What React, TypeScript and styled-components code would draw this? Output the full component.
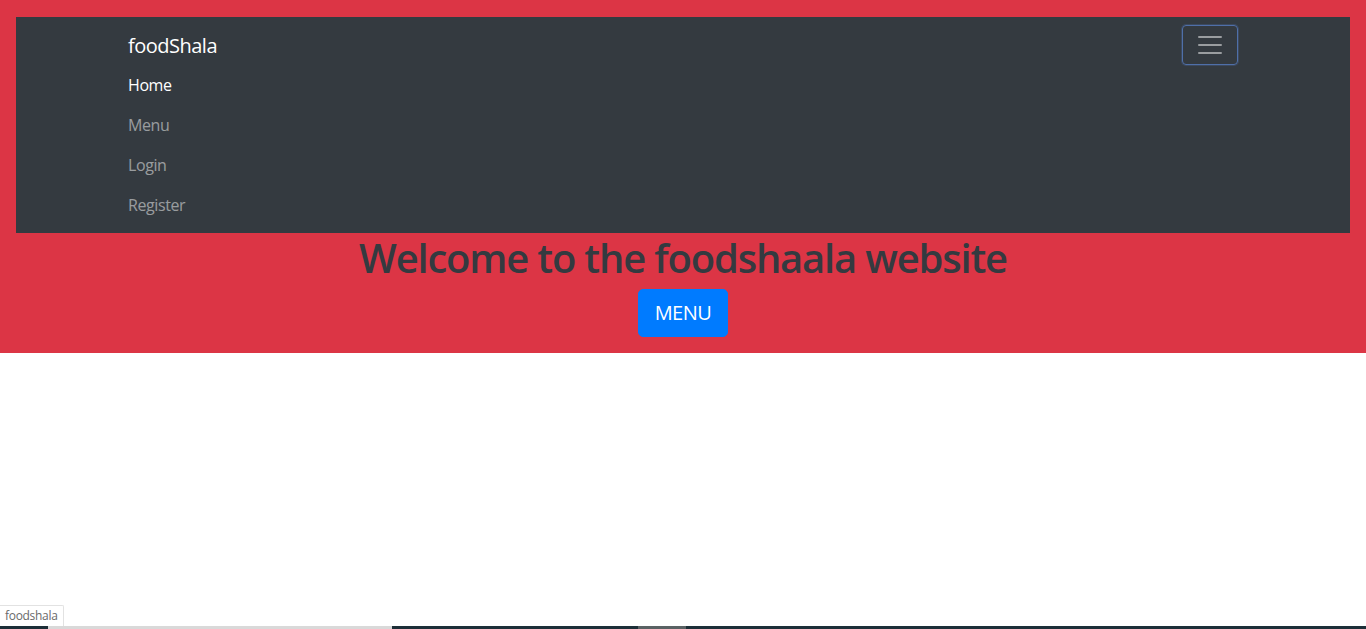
import React from "react";
import styled, { createGlobalStyle } from "styled-components";

const Global = createGlobalStyle`
  html, body { margin: 0; padding: 0; background: #fff; }
  body {
    font-family: "Open Sans", "Noto Sans", "Liberation Sans", sans-serif;
    font-size: 16px;
    line-height: 1.5;
    color: #212529;
  }
  * { box-sizing: border-box; }
`;

const Hero = styled.section`
  background: #dc3545;
  padding: 17px 16px 16px;
  display: flex;
  flex-direction: column;
  align-items: center;
`;

const Navbar = styled.nav`
  align-self: stretch;
  background: #343a40;
  padding: 8px 16px;
`;

const Container = styled.div`
  max-width: 1140px;
  margin: 0 auto;
  padding: 0 15px;
  display: flex;
  flex-wrap: wrap;
  align-items: center;
  justify-content: space-between;
`;

const Brand = styled.a`
  color: #fff;
  font-size: 20px;
  line-height: 30px;
  padding: 6px 0 4px;
  letter-spacing: -0.5px;
  text-decoration: none;
`;

const Toggler = styled.button`
  width: 56px;
  height: 40px;
  padding: 4px 12px;
  background: transparent;
  border: 1px solid #4f6fa8;
  border-radius: 4px;
  box-shadow: 0 0 0 1px rgba(80, 110, 170, 0.3);
  display: flex;
  align-items: center;
  justify-content: center;
`;

const NavList = styled.ul`
  flex-basis: 100%;
  list-style: none;
  margin: 0;
  padding: 0;
  display: flex;
  flex-direction: column;
`;

const NavLink = styled.a<{ $active?: boolean }>`
  display: block;
  padding: 8px 0;
  line-height: 24px;
  font-size: 16px;
  letter-spacing: -0.4px;
  text-decoration: none;
  color: ${(p) => (p.$active ? "#fff" : "rgba(255,255,255,0.5)")};
`;

const Title = styled.h1`
  margin: 1px 0 7px;
  font-size: 40px;
  line-height: 48px;
  font-weight: 600;
  color: #343a40;
  letter-spacing: -1.2px;
`;

const MenuButton = styled.button`
  font-family: inherit;
  font-size: 20px;
  line-height: 30px;
  padding: 8px 16px;
  border: 1px solid #007bff;
  border-radius: 5px;
  background: #007bff;
  color: #fff;
  letter-spacing: -0.5px;
`;

const StatusTip = styled.div`
  position: fixed;
  left: 0;
  bottom: 3px;
  height: 21px;
  padding: 0 5px;
  background: #fff;
  border: 1px solid #e2e2e2;
  border-left: none;
  border-bottom: none;
  border-top-right-radius: 2px;
  font-size: 12px;
  line-height: 20px;
  color: #6a6a6a;
  letter-spacing: -0.3px;
`;

const Taskbar = styled.div`
  position: fixed;
  left: 0;
  right: 0;
  bottom: 0;
  height: 3px;
  display: flex;
  background: #1d2f38;
`;

const TaskSeg = styled.div<{ $w: number; $c: string }>`
  width: ${(p) => p.$w}px;
  background: ${(p) => p.$c};
`;

const ToggleIcon = () => (
  <svg width="30" height="30" viewBox="0 0 30 30">
    <path
      d="M4 7h22M4 15h22M4 23h22"
      stroke="rgba(255,255,255,0.5)"
      strokeWidth="2"
      strokeLinecap="round"
    />
  </svg>
);

export default function App() {
  return (
    <>
      <Global />
      <Hero>
        <Navbar>
          <Container>
            <Brand href="#">foodShala</Brand>
            <Toggler aria-label="Toggle navigation">
              <ToggleIcon />
            </Toggler>
            <NavList>
              <li><NavLink href="#" $active>Home</NavLink></li>
              <li><NavLink href="#">Menu</NavLink></li>
              <li><NavLink href="#">Login</NavLink></li>
              <li><NavLink href="#">Register</NavLink></li>
            </NavList>
          </Container>
        </Navbar>
        <Title>Welcome to the foodshaala website</Title>
        <MenuButton>MENU</MenuButton>
      </Hero>
      <StatusTip>foodshala</StatusTip>
      <Taskbar>
        <TaskSeg $w={48} $c="#1d2f38" />
        <TaskSeg $w={344} $c="#d9d9d9" />
        <TaskSeg $w={246} $c="#1d2f38" />
        <TaskSeg $w={48} $c="#5a6264" />
      </Taskbar>
    </>
  );
}
